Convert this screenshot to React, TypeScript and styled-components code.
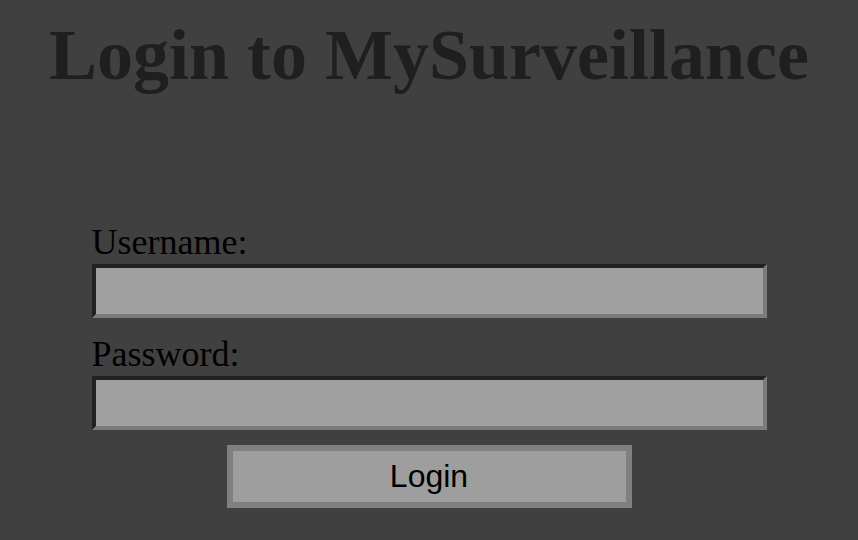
import React from "react";
import styled, { createGlobalStyle } from "styled-components";

const Global = createGlobalStyle`
  html, body { margin: 0; padding: 0; background: #404040; }
  body { font-family: "Liberation Serif", "Times New Roman", serif; }
`;

const Page = styled.main`
  min-height: 540px;
  background: #404040;
  display: flex;
  flex-direction: column;
  align-items: center;
`;

const Title = styled.h1`
  margin: 15px 0 0;
  font-family: "Liberation Serif", "Times New Roman", serif;
  font-weight: bold;
  font-size: 72px;
  line-height: 80px;
  color: #1f1f1f;
  text-align: center;
`;

const Form = styled.form`
  margin-top: 127px;
  width: 675px;
  display: flex;
  flex-direction: column;
`;

const Label = styled.label`
  display: block;
  font-family: "Liberation Serif", "Times New Roman", serif;
  font-size: 36px;
  line-height: 40px;
  color: #000;
  margin-top: ${(p: { $first?: boolean }) => (p.$first ? "0" : "16px")};
  margin-bottom: 2px;
`;

const Input = styled.input`
  box-sizing: border-box;
  width: 675px;
  height: 54px;
  margin: 0;
  padding: 0 8px;
  background: #a0a0a0;
  border-style: solid;
  border-width: 4px;
  border-color: #222222 #7b7b7b #7b7b7b #222222;
  font-size: 28px;
  outline: none;
`;

const Button = styled.button`
  box-sizing: border-box;
  align-self: center;
  margin-top: 15px;
  width: 405px;
  height: 63px;
  background: #9e9e9e;
  border: 6px solid #808080;
  font-family: "Liberation Sans", Arial, sans-serif;
  font-size: 32px;
  color: #000;
  padding: 0;
  cursor: pointer;
`;

export default function App() {
  return (
    <>
      <Global />
      <Page>
        <Title>Login to MySurveillance</Title>
        <Form onSubmit={(e) => e.preventDefault()}>
          <Label $first htmlFor="username">Username:</Label>
          <Input id="username" type="text" />
          <Label htmlFor="password">Password:</Label>
          <Input id="password" type="password" />
          <Button type="submit">Login</Button>
        </Form>
      </Page>
    </>
  );
}
